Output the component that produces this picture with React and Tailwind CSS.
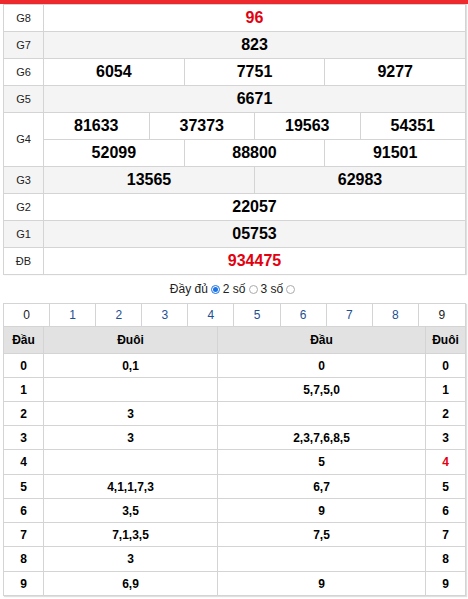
import React from "react";

const prizes = [
  { label: "G8", rows: [["96"]], red: true },
  { label: "G7", rows: [["823"]], gray: true },
  { label: "G6", rows: [["6054", "7751", "9277"]] },
  { label: "G5", rows: [["6671"]], gray: true },
  { label: "G4", rows: [["81633", "37373", "19563", "54351"], ["52099", "88800", "91501"]] },
  { label: "G3", rows: [["13565", "62983"]], gray: true },
  { label: "G2", rows: [["22057"]] },
  { label: "G1", rows: [["05753"]], gray: true },
  { label: "ĐB", rows: [["934475"]], red: true },
];

const loto = [
  ["0", "0,1", "0", "0"],
  ["1", "", "5,7,5,0", "1"],
  ["2", "3", "", "2"],
  ["3", "3", "2,3,7,6,8,5", "3"],
  ["4", "", "5", "4"],
  ["5", "4,1,1,7,3", "6,7", "5"],
  ["6", "3,5", "9", "6"],
  ["7", "7,1,3,5", "7,5", "7"],
  ["8", "3", "", "8"],
  ["9", "6,9", "9", "9"],
];

function Radio({ checked }) {
  return (
    <span
      className={
        "inline-flex items-center justify-center w-[9px] h-[9px] rounded-full border mx-[3px] " +
        (checked ? "border-[#1a73e8] bg-white" : "border-[#aaa] bg-white")
      }
    >
      {checked && <span className="w-[5px] h-[5px] rounded-full bg-[#1a73e8]" />}
    </span>
  );
}

export default function App() {
  return (
    <div className="w-[468px] h-[599px] bg-white font-['Liberation_Sans',Arial,sans-serif] text-black overflow-hidden">
      <div className="h-[4px] bg-[#ee2a2e]" />

      {/* Results */}
      <div className="ml-[3px] w-[463px] border-l border-r border-t border-[#d4d4d4] shadow-[1px_0_1px_rgba(0,0,0,0.12)]">
        {prizes.map((p) => (
          <div
            key={p.label}
            className={"flex border-b border-[#d4d4d4] " + (p.gray ? "bg-[#f4f4f4]" : "bg-white")}
          >
            <div className="w-[40px] shrink-0 border-r border-[#d4d4d4] flex items-center justify-center text-[11px] text-[#222]">
              {p.label}
            </div>
            <div className="flex-1 flex flex-col">
              {p.rows.map((row, ri) => (
                <div
                  key={ri}
                  className={
                    "flex " + (ri < p.rows.length - 1 ? "h-[27px] border-b border-[#d4d4d4]" : "h-[26px]")
                  }
                >
                  {row.map((n, i) => (
                    <div
                      key={i}
                      className={
                        "flex-1 flex items-center justify-center text-[16px] font-bold " +
                        (i < row.length - 1 ? "border-r border-[#d4d4d4] " : "") +
                        (p.red ? "text-[#e3000f]" : "text-black")
                      }
                    >
                      {n}
                    </div>
                  ))}
                </div>
              ))}
            </div>
          </div>
        ))}
      </div>

      {/* Options */}
      <div className="h-[28px] flex items-center justify-center text-[12px] text-[#222]">
        <span>Đầy đủ</span>
        <Radio checked />
        <span>2 số</span>
        <Radio />
        <span>3 số</span>
        <Radio />
      </div>

      {/* Loto */}
      <div className="ml-[3px] w-[463px] border border-[#d4d4d4] border-b-0 shadow-[1px_1px_1px_rgba(0,0,0,0.12)]">
        <div className="grid grid-cols-10 h-[23px] border-b border-[#d4d4d4]">
          {[0, 1, 2, 3, 4, 5, 6, 7, 8, 9].map((d) => (
            <div
              key={d}
              className={
                "flex items-center justify-center text-[12px] " +
                (d < 9 ? "border-r border-[#d4d4d4] " : "") +
                (d === 0 || d === 9 ? "text-[#222]" : "text-[#1d4f91]")
              }
            >
              {d}
            </div>
          ))}
        </div>

        <div className="flex h-[27px] bg-[#e2e2e2] border-b border-[#d4d4d4] text-[12px] font-bold">
          <div className="w-[40px] border-r border-[#d4d4d4] flex items-center justify-center">Đầu</div>
          <div className="w-[174px] border-r border-[#d4d4d4] flex items-center justify-center">Đuôi</div>
          <div className="w-[208px] border-r border-[#d4d4d4] flex items-center justify-center">Đầu</div>
          <div className="flex-1 flex items-center justify-center">Đuôi</div>
        </div>

        {loto.map((r, i) => (
          <div
            key={i}
            className={
              "flex border-b border-[#d4d4d4] text-[12px] font-bold " +
              (i === 4 || i === 8 ? "h-[25px]" : "h-[24px]")
            }
          >
            <div className="w-[40px] border-r border-[#d4d4d4] flex items-center justify-center">{r[0]}</div>
            <div className="w-[174px] border-r border-[#d4d4d4] flex items-center justify-center">{r[1]}</div>
            <div className="w-[208px] border-r border-[#d4d4d4] flex items-center justify-center">{r[2]}</div>
            <div className={"flex-1 flex items-center justify-center " + (i === 4 ? "text-[#e3000f]" : "")}>
              {r[3]}
            </div>
          </div>
        ))}
      </div>
    </div>
  );
}
